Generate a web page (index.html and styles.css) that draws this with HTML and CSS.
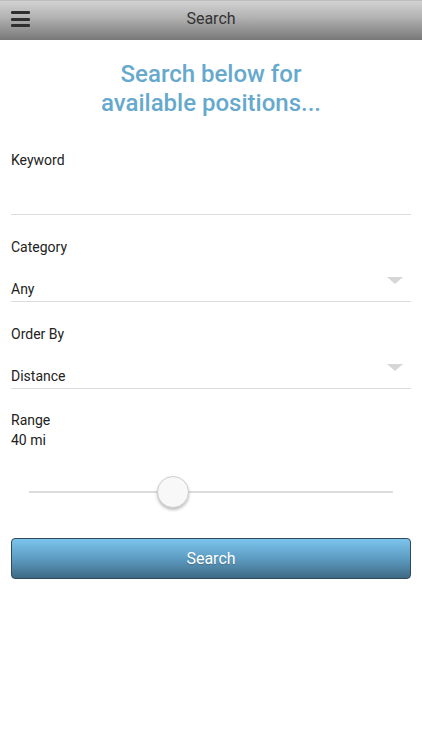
FILE: index.html
```html
<!DOCTYPE html>
<html lang="en">
<head>
    <meta charset="UTF-8">
    <meta name="viewport" content="width=device-width, initial-scale=1.0">
    <title>Search</title>
    <link rel="stylesheet" href="styles.css">
</head>
<body>
    <div class="header">
        <button class="menu-btn" aria-label="Menu">
            <span></span><span></span><span></span>
        </button>
        <div class="header-title">Search</div>
    </div>
    <div class="content">
        <h1 class="heading">Search below for<br>available positions...</h1>
        <div class="field first">
            <label for="keyword">Keyword</label>
            <input id="keyword" class="text-input" type="text">
        </div>
        <div class="field">
            <label>Category</label>
            <div class="select">
                <span>Any</span>
                <span class="arrow"></span>
            </div>
        </div>
        <div class="field">
            <label>Order By</label>
            <div class="select">
                <span>Distance</span>
                <span class="arrow"></span>
            </div>
        </div>
        <div class="field range">
            <label>Range</label>
            <div class="range-value">40 mi</div>
        </div>
        <div class="slider">
            <div class="track">
                <div class="thumb" style="left: 39.5%"></div>
            </div>
        </div>
        <button class="search-btn">Search</button>
    </div>
</body>
</html>
```
FILE: styles.css
```css
body {
    margin: 0;
    background: #ffffff;
    font-family: Roboto, "Liberation Sans", sans-serif;
    color: #222;
}
.header {
    height: 40px;
    position: relative;
    display: flex;
    align-items: center;
    justify-content: center;
    background: linear-gradient(to bottom, #d2d2d2, #b4b4b4 40%, #787878);
    border-top: 1px solid #bdbdbd;
    box-sizing: border-box;
}
.header-title {
    font-size: 16px;
    color: #333;
    margin-top: -4px;
}
.menu-btn {
    position: absolute;
    left: 11px;
    top: 10px;
    width: 19px;
    height: 16px;
    padding: 0;
    border: none;
    background: transparent;
    display: flex;
    flex-direction: column;
    justify-content: space-between;
}
.menu-btn span {
    display: block;
    height: 3px;
    background: #2e2e2e;
    border-radius: 1px;
}
.content {
    padding: 0 11px;
}
.heading {
    margin: 20px 0 0;
    text-align: center;
    font-size: 24px;
    line-height: 29px;
    font-weight: 500;
    color: #66a9cd;
}
.field {
    margin-top: 22px;
}
.field.first {
    margin-top: 32px;
}
.field.range {
    margin-top: 21px;
}
.field label {
    display: block;
    font-size: 14px;
    line-height: 20px;
    color: #222;
}
.text-input {
    display: block;
    width: 100%;
    height: 45px;
    box-sizing: border-box;
    border: none;
    border-bottom: 1px solid #dcdcdc;
    outline: none;
    font-family: inherit;
    font-size: 14px;
    padding: 0;
}
.select {
    height: 45px;
    box-sizing: border-box;
    border-bottom: 1px solid #dcdcdc;
    display: flex;
    align-items: flex-end;
    justify-content: space-between;
    font-size: 14px;
    line-height: 20px;
    padding-bottom: 2px;
}
.arrow {
    width: 0;
    height: 0;
    border-left: 8px solid transparent;
    border-right: 8px solid transparent;
    border-top: 7px solid #d6d6d6;
    margin-right: 8px;
    margin-bottom: 15px;
}
.range-value {
    font-size: 14px;
    line-height: 20px;
}
.slider {
    padding: 26px 18px 0;
}
.track {
    position: relative;
    height: 32px;
    display: flex;
    align-items: center;
}
.track::before {
    content: '';
    display: block;
    width: 100%;
    height: 2px;
    background: #dddddd;
}
.thumb {
    position: absolute;
    top: 0;
    width: 32px;
    height: 32px;
    box-sizing: border-box;
    border-radius: 50%;
    background: #f8f8f8;
    border: 1px solid #cfcfcf;
    box-shadow: 0 2px 3px rgba(0, 0, 0, 0.25);
    transform: translateX(-50%);
}
.search-btn {
    display: block;
    width: 100%;
    height: 41px;
    margin-top: 30px;
    border: 1px solid #2f4a5a;
    border-radius: 4px;
    background: linear-gradient(to bottom, #7cc4ec, #5d9cc2 50%, #3e6a84);
    color: #ffffff;
    font-family: inherit;
    font-size: 16px;
    text-shadow: 0 1px 1px rgba(0, 0, 0, 0.2);
}
```
